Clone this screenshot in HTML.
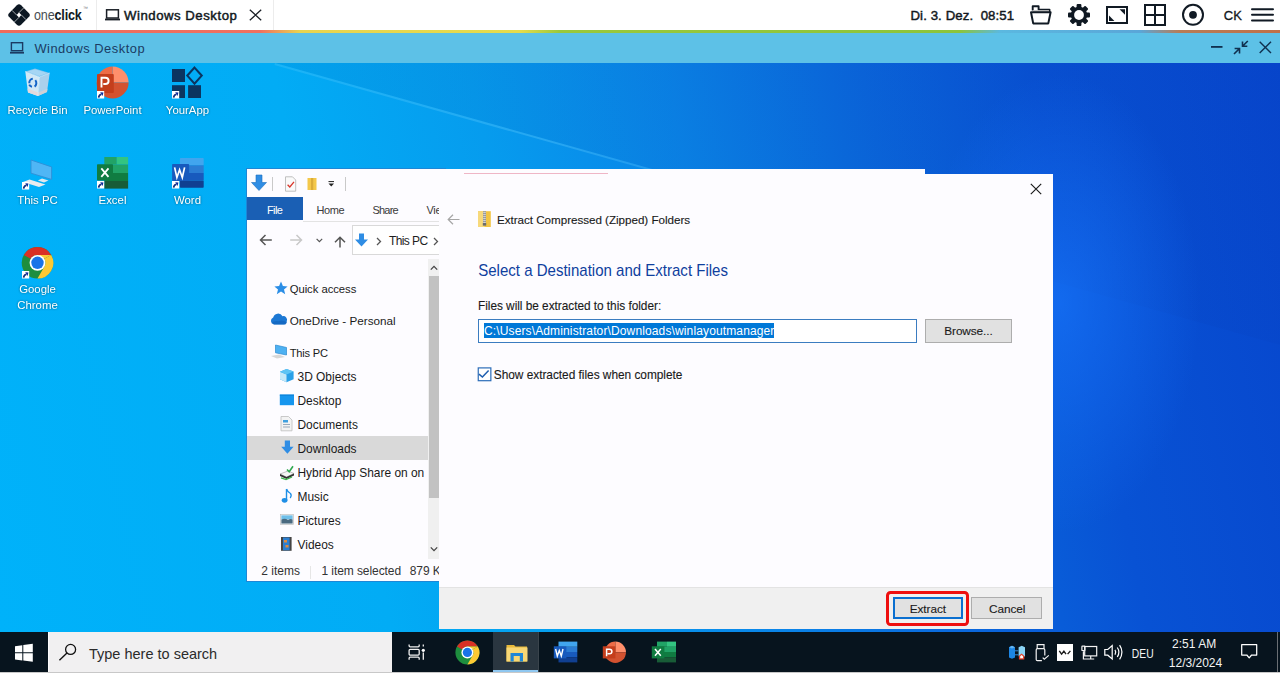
<!DOCTYPE html>
<html><head><meta charset="utf-8"><style>
html,body{margin:0;padding:0;width:1280px;height:673px;overflow:hidden;background:#fff;}
body{position:relative;font-family:"Liberation Sans", sans-serif;}
.t{position:absolute;line-height:1;white-space:nowrap;}
.s{position:absolute;left:0;top:0;overflow:visible;font-family:"Liberation Sans", sans-serif;white-space:pre}
svg{overflow:visible}
</style></head><body>
<div style="position:absolute;left:0px;top:0px;width:1280px;height:30px;background:#fff"></div>
<div style="position:absolute;left:96px;top:0px;width:1px;height:30px;background:#ececec"></div>
<div style="position:absolute;left:273px;top:0px;width:1px;height:30px;background:#ececec"></div>
<svg style="position:absolute;left:7px;top:2.7px;" width="24" height="24" viewBox="0 0 24 24"><g transform="rotate(45 12 12)">
<rect x="3.6" y="3.6" width="16.8" height="16.8" rx="3" fill="#0c1722"/>
<path d="M10.32 3.7 V10.5 M13.5 10.32 H20.3 M13.68 13.5 V20.3 M3.7 13.68 H10.5" fill="none" stroke="#c9ccd0" stroke-width="0.75"/>
<rect x="10.32" y="10.32" width="3.36" height="3.36" fill="#fff"/>
</g></svg>
<svg class="s" width="1" height="1"><text transform="translate(34 20) scale(0.84 1)" x="0" y="0" style="font-size:15px;letter-spacing:-0.2px"><tspan fill="#4a4f55">one</tspan><tspan fill="#111a24" font-weight="bold">click</tspan></text></svg>
<svg class="s" width="1" height="1"><text x="83" y="9.5" text-anchor="start" style="font-size:5px;fill:#777;font-weight:normal;">™</text></svg>
<svg style="position:absolute;left:105px;top:9px;" width="15" height="12" viewBox="0 0 15 12"><rect x="1.6" y="0.8" width="11.8" height="8.2" fill="none" stroke="#1a1f26" stroke-width="1.5"/>
<rect x="0" y="9.6" width="15" height="1.8" fill="#1a1f26"/></svg>
<svg class="s" width="1" height="1"><text x="124" y="20" text-anchor="start" style="font-size:13.2px;fill:#111820;font-weight:normal;letter-spacing:0.52px;stroke:#111820;stroke-width:0.45px">Windows Desktop</text></svg>
<svg style="position:absolute;left:249px;top:9px;" width="13" height="12" viewBox="0 0 13 12"><path d="M0.8 0.8 L12.2 11.2 M12.2 0.8 L0.8 11.2" stroke="#1a1f26" stroke-width="1.3"/></svg>
<svg class="s" width="1" height="1"><text x="910.5" y="20" text-anchor="start" style="font-size:13.2px;fill:#111820;font-weight:normal;letter-spacing:0.1px;stroke:#111820;stroke-width:0.45px">Di. 3. Dez.&nbsp; 08:51</text></svg>
<svg style="position:absolute;left:1030px;top:5px;" width="22" height="20" viewBox="0 0 22 20"><path d="M2.7 5.6 V1.3 H8.6 V4.6 H19.5 V7.2" fill="none" stroke="#111a24" stroke-width="1.9" stroke-linejoin="round"/>
<rect x="3" y="5.2" width="16" height="2" fill="#bbb"/>
<path d="M1 7.3 H20.6 L18.3 18.4 H3.2 Z" fill="none" stroke="#111a24" stroke-width="2" stroke-linejoin="round"/></svg>
<svg style="position:absolute;left:1068px;top:4px;" width="22" height="22" viewBox="0 0 22 22"><rect x="8.6" y="0" width="4.8" height="6" rx="1" transform="rotate(0 11 11)" fill="#0f1822"/><rect x="8.6" y="0" width="4.8" height="6" rx="1" transform="rotate(45 11 11)" fill="#0f1822"/><rect x="8.6" y="0" width="4.8" height="6" rx="1" transform="rotate(90 11 11)" fill="#0f1822"/><rect x="8.6" y="0" width="4.8" height="6" rx="1" transform="rotate(135 11 11)" fill="#0f1822"/><rect x="8.6" y="0" width="4.8" height="6" rx="1" transform="rotate(180 11 11)" fill="#0f1822"/><rect x="8.6" y="0" width="4.8" height="6" rx="1" transform="rotate(225 11 11)" fill="#0f1822"/><rect x="8.6" y="0" width="4.8" height="6" rx="1" transform="rotate(270 11 11)" fill="#0f1822"/><rect x="8.6" y="0" width="4.8" height="6" rx="1" transform="rotate(315 11 11)" fill="#0f1822"/><circle cx="11" cy="11" r="8.2" fill="#0f1822"/><circle cx="11" cy="11" r="4.9" fill="#fff"/></svg>
<svg style="position:absolute;left:1106px;top:6px;" width="22" height="18" viewBox="0 0 22 18"><rect x="1" y="1" width="20" height="16" fill="none" stroke="#111a24" stroke-width="2"/>
<path d="M13.5 3.2 H19 V8.7 Z" fill="#111a24"/><path d="M3 9.6 V15 H8.4 Z" fill="#111a24"/></svg>
<svg style="position:absolute;left:1144px;top:4px;" width="22" height="22" viewBox="0 0 22 22"><rect x="1" y="1" width="20" height="20" fill="none" stroke="#111a24" stroke-width="2"/>
<path d="M11 1 V21 M1 11 H21" stroke="#111a24" stroke-width="2"/></svg>
<svg style="position:absolute;left:1182px;top:4px;" width="22" height="22" viewBox="0 0 22 22"><circle cx="11" cy="10.8" r="10" fill="none" stroke="#111a24" stroke-width="2"/>
<circle cx="11" cy="10.8" r="3.9" fill="#111a24"/></svg>
<svg class="s" width="1" height="1"><text x="1223.8" y="20" text-anchor="start" style="font-size:13px;fill:#111820;font-weight:normal;letter-spacing:0px;stroke:#111820;stroke-width:0.3px">CK</text></svg>
<svg style="position:absolute;left:1251px;top:7px;" width="23" height="16" viewBox="0 0 23 16"><path d="M1 2.2 H22 M1 7.8 H22 M1 13.5 H22" stroke="#111a24" stroke-width="2" stroke-linecap="round"/></svg>
<div style="position:absolute;left:0px;top:30px;width:1280px;height:3px;background:linear-gradient(90deg,#ef6b5c 0px,#f07060 260px,#e8d450 300px,#e6dc4c 520px,#9ac83c 560px,#8cc43c 960px,#5bb8e0 1000px,#5aa6d8 1140px,#b87c56 1180px,#c07048 1280px)"></div>
<div style="position:absolute;left:0px;top:33px;width:1280px;height:30px;background:#5dc1e7"></div>
<svg style="position:absolute;left:10px;top:42px;" width="14" height="12" viewBox="0 0 14 12"><rect x="1.4" y="0.7" width="11.2" height="8" fill="none" stroke="#1b3b63" stroke-width="1.4"/>
<rect x="0" y="9.8" width="14" height="1.8" fill="#1b3b63"/></svg>
<svg class="s" width="1" height="1"><text x="34.4" y="52.6" text-anchor="start" style="font-size:12.9px;fill:#1b3b63;font-weight:normal;letter-spacing:0.5px">Windows Desktop</text></svg>
<svg style="position:absolute;left:1211px;top:46px;" width="12" height="2" viewBox="0 0 12 2"><rect x="0" y="0" width="11.5" height="1.8" fill="#10304f"/></svg>
<svg style="position:absolute;left:1233px;top:40px;" width="16" height="15" viewBox="0 0 16 15"><path d="M1 14 L6.5 8.5 M1.6 8.5 H6.5 V13.5 M14.8 1 L9.5 6.3 M9.5 1.5 V6.3 H14.3" fill="none" stroke="#10304f" stroke-width="1.6"/></svg>
<svg style="position:absolute;left:1259px;top:41px;" width="13" height="13" viewBox="0 0 13 13"><path d="M0.7 0.7 L12 12 M12 0.7 L0.7 12" stroke="#10304f" stroke-width="1.4"/></svg>
<div style="position:absolute;left:0;top:63px;width:1280px;height:569px;overflow:hidden;background:linear-gradient(78deg,#00b2fa 0%,#02acf5 28%,#069cee 42%,#0a84e8 56%,#0a66dc 70%,#0852d4 82%,#0746cd 100%)">
<div style="position:absolute;left:0;top:0;width:1280px;height:569px;clip-path:polygon(275px 0,1280px 0,1280px 282px);background:linear-gradient(90deg,rgba(0,20,110,0.07),rgba(0,20,110,0.03))"></div>
<div style="position:absolute;left:275px;top:0px;width:560px;height:2px;transform-origin:0 0;transform:rotate(15.7deg);background:linear-gradient(90deg,rgba(110,210,255,0.22),rgba(110,210,255,0.3) 50%,rgba(110,210,255,0.15))"></div>
<div style="position:absolute;left:900px;top:0px;width:380px;height:569px;background:radial-gradient(ellipse 140px 230px at 160px 240px,rgba(25,120,255,0.6),rgba(25,120,255,0))"></div>
</div>
<div style="position:absolute;left:0px;top:632px;width:1280px;height:40px;background:#07141e"></div>
<div style="position:absolute;left:0px;top:672px;width:1280px;height:1px;background:#c8c8c8"></div>
<div style="position:absolute;left:1277px;top:632px;width:1px;height:40px;background:#6a6f74"></div>
<div style="position:absolute;left:48px;top:632px;width:344px;height:40px;background:#f1f0f1;border-left:1px solid #fbfbfb;box-sizing:border-box"></div>
<svg style="position:absolute;left:14px;top:643px;" width="20" height="20" viewBox="0 0 20 20"><path d="M1 3.2 L8.3 2.2 V9.3 H1 Z M9.3 2.05 L18.8 0.8 V9.3 H9.3 Z M1 10.3 H8.3 V17.5 L1 16.5 Z M9.3 10.3 H18.8 V18.8 L9.3 17.6 Z" fill="#fff"/></svg>
<svg style="position:absolute;left:58px;top:643px;" width="20" height="18" viewBox="0 0 20 18"><circle cx="12.6" cy="6.4" r="5" fill="none" stroke="#111" stroke-width="1.3"/><path d="M9 10 L1.4 17.2" stroke="#111" stroke-width="1.4"/></svg>
<svg class="s" width="1" height="1"><text x="89" y="659.4" text-anchor="start" style="font-size:14.5px;fill:#2b2b2b;font-weight:normal;letter-spacing:0px">Type here to search</text></svg>
<svg style="position:absolute;left:407px;top:643px;" width="19" height="18" viewBox="0 0 19 18"><g fill="none" stroke="#f0f0f0" stroke-width="1.3"><path d="M2.1 1.4 V2.8 Q2.1 3.9 3.2 3.9 H11.1 Q12.2 3.9 12.2 2.8 V1.4"/><rect x="2.1" y="6.4" width="10.1" height="5.7" rx="1.1"/><path d="M2.1 16.7 V15.3 Q2.1 14.2 3.2 14.2 H11.1 Q12.2 14.2 12.2 15.3 V16.7"/><path d="M16.3 1.4 V3.4 M16.3 9.6 V16.7"/></g><circle cx="16.3" cy="7.3" r="1.6" fill="#fff"/></svg>
<svg style="position:absolute;left:455px;top:640px;" width="25" height="25" viewBox="0 0 25 25">
<circle cx="12.4" cy="12.4" r="12" fill="#1e8e3e"/>
<path d="M12.4 0.4 A12 12 0 0 1 22.8 6.4 L12.4 6.4 A6 6 0 0 0 7.2 9.4 L2 6.4 A12 12 0 0 1 12.4 0.4Z" fill="#d93025"/>
<path d="M22.8 6.4 A12 12 0 0 1 12.4 24.4 L17.6 15.4 A6 6 0 0 0 17.6 9.4 Z" fill="#fcc934"/>
<path d="M22.8 6.4 L12.4 6.4 L17.6 9.4 Z" fill="#fcc934"/>
<circle cx="12.4" cy="12.4" r="6" fill="#fff"/><circle cx="12.4" cy="12.4" r="4.6" fill="#1a73e8"/></svg>
<div style="position:absolute;left:493px;top:632px;width:45px;height:40px;background:#2a3640"></div>
<div style="position:absolute;left:493px;top:670px;width:45px;height:2px;background:#8fc7f0"></div>
<div style="position:absolute;left:538px;top:632px;width:1px;height:40px;background:#3a444c"></div>
<svg style="position:absolute;left:506px;top:643px;" width="22" height="19" viewBox="0 0 22 19"><path d="M0.5 2 H8 L9.5 3.5 H21 V18.5 H0.5 Z" fill="#e8b93a"/><rect x="0.5" y="4.5" width="21" height="14" fill="#f8d775"/><path d="M4.5 18.5 V10 H17 V18.5 H13.8 V13 H7.7 V18.5 Z" fill="#1f86d6"/></svg>
<svg style="position:absolute;left:553px;top:641px;" width="25" height="22" viewBox="0 0 25 22"><rect x="5.5" y="0.6" width="18.8" height="5.2" fill="#41a5ee"/><rect x="5.5" y="5.8" width="18.8" height="5.2" fill="#2b7cd3"/><rect x="5.5" y="11" width="18.8" height="5.2" fill="#185abd"/><rect x="5.5" y="16.2" width="18.8" height="5.2" fill="#103f91"/><rect x="0.8" y="5.3" width="12.6" height="12.1" fill="#185abd"/><path d="M2.6 8 L4.3 15 L6.3 9.6 L8.3 15 L10 8" fill="none" stroke="#fff" stroke-width="1.4"/></svg>
<svg style="position:absolute;left:602px;top:641px;" width="25" height="23" viewBox="0 0 25 23"><path d="M13.3 11.3 V0.6 A10.7 10.7 0 0 1 24 11.3 Z" fill="#ff8f6b"/><path d="M13.3 11.3 V0.6 A10.7 10.7 0 0 0 2.6 11.3 Z" fill="#ed6c47"/><path d="M2.6 11.3 A10.7 10.7 0 0 0 24 11.3 Z" fill="#d35230"/><rect x="0.8" y="5.3" width="12.6" height="12.1" fill="#c43e1c"/><path d="M4.6 15.2 V8.2 H7.4 Q9.9 8.2 9.9 10.5 Q9.9 12.8 7.4 12.8 H5.6" fill="none" stroke="#fff" stroke-width="1.5"/></svg>
<svg style="position:absolute;left:651px;top:641px;" width="26" height="22" viewBox="0 0 26 22"><rect x="6" y="0.6" width="10" height="5.2" fill="#21a366"/><rect x="16" y="0.6" width="9" height="5.2" fill="#33c481"/><rect x="6" y="5.8" width="19" height="5.2" fill="#21a366"/><rect x="6" y="11" width="19" height="5.2" fill="#107c41"/><rect x="6" y="16.2" width="19" height="5.2" fill="#185c37"/><rect x="0.8" y="5.3" width="12.6" height="12.1" fill="#107c41"/><path d="M4 8 L9.8 14.8 M9.8 8 L4 14.8" stroke="#fff" stroke-width="1.5"/></svg>
<svg style="position:absolute;left:1008px;top:645px;" width="18" height="16" viewBox="0 0 18 16"><path d="M1 2.2 L4 0.8 L7 2.2 V12.6 L4 13.8 L1 12.6 Z" fill="#1d86e4"/><path d="M1 2.2 L4 0.8 L7 2.2 L4 3.4 Z" fill="#64b5f0"/><path d="M10.6 2.2 L13.8 0.8 L17 2.2 V11.2 L13.8 12.6 L10.6 11.2 Z" fill="#8ad4f6"/><path d="M7 5.8 H10.6 M7 9.8 H10.6" stroke="#3a8ad6" stroke-width="1"/><path d="M13.6 8.4 L16.3 10.7 V14.6 H10.9 V10.7 Z" fill="#e8452c"/><path d="M13.6 10.1 L15 11.3 V13.3 H12.2 V11.3 Z" fill="#fff"/></svg>
<svg style="position:absolute;left:1035px;top:644px;" width="15" height="17" viewBox="0 0 15 17"><g fill="none" stroke="#f2f2f2" stroke-width="1.2"><path d="M2.2 4.4 V0.7 H9 V4.4"/><path d="M9.8 11.6 V5.9 Q9.8 4.7 8.6 4.7 H2.4 Q1.2 4.7 1.2 5.9 V15.5 Q1.2 16.6 2.4 16.6 H6.9"/><path d="M7.7 13.6 L9.3 15.2 L13.8 11.4"/></g></svg>
<div style="position:absolute;left:1057px;top:644px;width:16px;height:16.5px;background:#fff"></div>
<svg style="position:absolute;left:1057px;top:644px;" width="17" height="17" viewBox="0 0 17 17"><path d="M2.3 6.9 L4.6 10.1 L6.9 7.1 L9 10.1 M10.6 10.1 L13.4 6.9" fill="none" stroke="#1a1a1a" stroke-width="1.4"/></svg>
<svg style="position:absolute;left:1080px;top:645px;" width="19" height="16" viewBox="0 0 19 16"><g fill="none" stroke="#f2f2f2" stroke-width="1.2"><rect x="4.7" y="1.5" width="12" height="9.4"/><path d="M10.7 10.9 V13.8 M6.8 14 H14.2 M3.4 6.2 V14 H6.8"/><rect x="1.9" y="1.1" width="3" height="4.4" rx="0.6"/></g></svg>
<svg style="position:absolute;left:1104px;top:644px;" width="19" height="17" viewBox="0 0 19 17"><g fill="none" stroke="#fff" stroke-width="1.2"><path d="M0.8 5.5 H3.8 L8.2 1.5 V15 L3.8 11.2 H0.8 Z"/><path d="M11 5.8 Q12.6 8.2 11 10.8 M13.3 3.5 Q16.5 8.2 13.3 13 M15.6 1.2 Q20.3 8.2 15.6 15.3"/></g></svg>
<svg class="s" width="1" height="1"><text transform="translate(1131.8 657.7) scale(0.86 1)" x="0" y="0" style="font-size:12px;fill:#f4f4f4;font-weight:normal;">DEU</text></svg>
<svg class="s" width="1" height="1"><text x="1172" y="647.8" text-anchor="start" style="font-size:12px;fill:#f4f4f4;font-weight:normal;letter-spacing:0.05px">2:51 AM</text></svg>
<svg class="s" width="1" height="1"><text x="1168.8" y="666.6" text-anchor="start" style="font-size:12px;fill:#f4f4f4;font-weight:normal;">12/3/2024</text></svg>
<svg style="position:absolute;left:1241px;top:644px;" width="17" height="16" viewBox="0 0 17 16"><path d="M0.7 0.7 H15.7 V11 H10.6 L8.2 13.8 L5.8 11 H0.7 Z" fill="none" stroke="#fff" stroke-width="1.25" stroke-linejoin="round"/></svg>
<div style="position:absolute;left:246px;top:168px;width:200px;height:414px;background:#1d87d6"></div>
<div style="position:absolute;left:247px;top:169px;width:199px;height:412px;background:#fdfcff"></div>
<svg style="position:absolute;left:251px;top:174px;" width="17" height="18" viewBox="0 0 17 18"><path d="M5 1 H11 V8.5 H15.5 L8 16.5 L0.5 8.5 H5 Z" fill="#2f8de4" stroke="#1c6fc0" stroke-width="0.6"/></svg>
<div style="position:absolute;left:272px;top:177px;width:1px;height:14px;background:#c9c9c9"></div>
<svg style="position:absolute;left:284px;top:176px;" width="13" height="16" viewBox="0 0 13 16"><path d="M1.5 0.8 H8.5 L11.7 4 V15.2 H1.5 Z" fill="#fafafa" stroke="#b9b9b9" stroke-width="0.9"/>
<path d="M3.6 8.8 L5.8 11 L10 5.8" fill="none" stroke="#d9362b" stroke-width="1.3"/></svg>
<svg style="position:absolute;left:307px;top:178px;" width="11" height="13" viewBox="0 0 11 13"><rect x="0.5" y="0" width="9" height="12" fill="#f4c84a"/><rect x="4" y="0" width="2.2" height="12" fill="#c99a2e" opacity="0.6"/></svg>
<svg style="position:absolute;left:328px;top:181px;" width="7" height="6" viewBox="0 0 7 6"><rect x="0.5" y="0" width="5.5" height="1.1" fill="#333"/><path d="M0.5 2.4 H6 L3.25 5.4 Z" fill="#222"/></svg>
<div style="position:absolute;left:345px;top:177px;width:1px;height:14px;background:#c9c9c9"></div>
<div style="position:absolute;left:247px;top:197px;width:56px;height:23px;background:#1a5fb4"></div>
<svg class="s" width="1" height="1"><text x="267" y="213.75" text-anchor="start" style="font-size:11px;fill:#fff;font-weight:normal;letter-spacing:-0.6px">File</text></svg>
<svg class="s" width="1" height="1"><text x="316.5" y="213.75" text-anchor="start" style="font-size:11px;fill:#3b3b3b;font-weight:normal;letter-spacing:-0.4px">Home</text></svg>
<svg class="s" width="1" height="1"><text x="372.5" y="213.75" text-anchor="start" style="font-size:11px;fill:#3b3b3b;font-weight:normal;letter-spacing:-0.8px">Share</text></svg>
<svg class="s" width="1" height="1"><text x="426.5" y="213.75" text-anchor="start" style="font-size:11px;fill:#3b3b3b;font-weight:normal;letter-spacing:-0.3px">View</text></svg>
<div style="position:absolute;left:303px;top:221px;width:143px;height:1px;background:#e3e3e3"></div>
<svg style="position:absolute;left:259px;top:234px;" width="14" height="12" viewBox="0 0 14 12"><path d="M1.5 6 H12.8 M6.5 1 L1.5 6 L6.5 11" fill="none" stroke="#555" stroke-width="1.5"/></svg>
<svg style="position:absolute;left:289px;top:234px;" width="14" height="12" viewBox="0 0 14 12"><path d="M12.5 6 H1.2 M7.5 1 L12.5 6 L7.5 11" fill="none" stroke="#c8c8c8" stroke-width="1.5"/></svg>
<svg style="position:absolute;left:316px;top:238px;" width="7" height="5" viewBox="0 0 7 5"><path d="M0.6 0.8 L3.4 3.6 L6.2 0.8" fill="none" stroke="#555" stroke-width="1.2"/></svg>
<svg style="position:absolute;left:334px;top:236px;" width="12" height="12" viewBox="0 0 12 12"><path d="M6 11.5 V1.2 M1 6.2 L6 1.2 L11 6.2" fill="none" stroke="#555" stroke-width="1.5"/></svg>
<div style="position:absolute;left:352px;top:225px;width:94px;height:30px;border:1px solid #d9d9d9;border-right:none;box-sizing:border-box;background:#fff"></div>
<svg style="position:absolute;left:355px;top:233px;" width="14" height="14" viewBox="0 0 14 14"><path d="M4 0.5 H9 V6.5 H13 L6.5 13.5 L0 6.5 H4 Z" fill="#2f8de4"/></svg>
<svg style="position:absolute;left:376px;top:237px;" width="6" height="9" viewBox="0 0 6 9"><path d="M1 1 L4.5 4.5 L1 8" fill="none" stroke="#555" stroke-width="1.3"/></svg>
<svg class="s" width="1" height="1"><text x="389" y="245" text-anchor="start" style="font-size:12px;fill:#1e1e1e;font-weight:normal;letter-spacing:-0.6px">This PC</text></svg>
<svg style="position:absolute;left:433px;top:237px;" width="6" height="9" viewBox="0 0 6 9"><path d="M1 1 L4.5 4.5 L1 8" fill="none" stroke="#555" stroke-width="1.3"/></svg>
<div style="position:absolute;left:247px;top:436px;width:181px;height:24px;background:#d9d9d9"></div>
<svg style="position:absolute;left:273px;top:281px;" width="15" height="14" viewBox="0 0 15 14"><path d="M8 0.6 L9.9 5.1 L14.6 5.4 L11 8.5 L12.2 13.2 L8 10.6 L3.8 13.2 L5 8.5 L1.4 5.4 L6.1 5.1 Z" fill="#2b8ee6"/></svg>
<svg class="s" width="1" height="1"><text x="289.7" y="293" text-anchor="start" style="font-size:11.3px;fill:#1a1a1a;font-weight:normal;letter-spacing:-0.05px">Quick access</text></svg>
<svg style="position:absolute;left:270px;top:313px;" width="18" height="12" viewBox="0 0 18 12"><path d="M4 11.5 A3.6 3.6 0 0 1 3.2 4.6 A5 5 0 0 1 12.5 3.2 A3.7 3.7 0 0 1 16.8 8.2 A3.4 3.4 0 0 1 13.8 11.5 Z" fill="#1c78d4"/><path d="M1.2 10 Q4 7.5 8.5 8.2 Q13 6.5 16.9 9.6 L15.5 11.5 H4 Z" fill="#0f5fb8" opacity="0.6"/></svg>
<svg class="s" width="1" height="1"><text x="289.7" y="324.85" text-anchor="start" style="font-size:11.7px;fill:#1a1a1a;font-weight:normal;letter-spacing:0px">OneDrive - Personal</text></svg>
<svg style="position:absolute;left:270px;top:344px;" width="18" height="15" viewBox="0 0 18 15"><path d="M5.5 1 L16.5 3.5 V11 L5.5 8.8 Z" fill="#4db1f2" stroke="#2d8ad0" stroke-width="0.7"/><path d="M1 12 L9 10.5 L15 13 L7 14.5 Z" fill="#d7d7d7"/></svg>
<svg class="s" width="1" height="1"><text x="289.7" y="356.7" text-anchor="start" style="font-size:11.1px;fill:#1a1a1a;font-weight:normal;letter-spacing:-0.2px">This PC</text></svg>
<svg style="position:absolute;left:279px;top:368px;" width="16" height="15" viewBox="0 0 16 15"><path d="M1 3.8 L7.5 1 L14.6 3.6 L14.6 11.3 L7.5 14.2 L1 11.3 Z" fill="#2aa0e8"/><path d="M1 3.8 L7.5 6.4 L7.5 14.2 L1 11.3 Z" fill="#c6e8f8"/><path d="M1 3.8 L7.5 1 L14.6 3.6 L7.5 6.4 Z" fill="#5fc4f4"/></svg>
<svg class="s" width="1" height="1"><text x="297.5" y="380.5" text-anchor="start" style="font-size:11.95px;fill:#1a1a1a;font-weight:normal;letter-spacing:0px">3D Objects</text></svg>
<svg style="position:absolute;left:279px;top:394px;" width="16" height="12" viewBox="0 0 16 12"><rect x="0.8" y="0.6" width="14.2" height="10.6" fill="#1696ee"/><rect x="0.8" y="0.6" width="14.2" height="1" fill="#0b7fd4"/></svg>
<svg class="s" width="1" height="1"><text x="297.5" y="404.5" text-anchor="start" style="font-size:11.95px;fill:#1a1a1a;font-weight:normal;letter-spacing:0px">Desktop</text></svg>
<svg style="position:absolute;left:280px;top:416px;" width="13" height="16" viewBox="0 0 13 16"><path d="M1 0.5 H8.5 L12 4 V14.8 H1 Z" fill="#f3f3f3" stroke="#bdbdbd" stroke-width="0.8"/><rect x="3" y="4" width="5" height="2.5" fill="#3fa0e0"/><rect x="3" y="8" width="7" height="1" fill="#9ab"/><rect x="3" y="10.5" width="7" height="1" fill="#9ab"/></svg>
<svg class="s" width="1" height="1"><text x="297.5" y="428.7" text-anchor="start" style="font-size:11.95px;fill:#1a1a1a;font-weight:normal;letter-spacing:0px">Documents</text></svg>
<svg style="position:absolute;left:281px;top:440px;" width="13" height="15" viewBox="0 0 13 15"><path d="M3.8 0.5 H9 V6.8 H12.6 L6.4 13.8 L0.2 6.8 H3.8 Z" fill="#2f8de4"/></svg>
<svg class="s" width="1" height="1"><text x="297.5" y="452.8" text-anchor="start" style="font-size:11.95px;fill:#1a1a1a;font-weight:normal;letter-spacing:0px">Downloads</text></svg>
<svg style="position:absolute;left:279px;top:465px;" width="16" height="15" viewBox="0 0 16 15"><path d="M1 9 L9 6 L15 8.5 L7.5 12 Z" fill="#f5f5f5" stroke="#999" stroke-width="0.6"/><path d="M1 9 V11 L7.5 14 L15 10.5 V8.5 L7.5 12 Z" fill="#333"/><path d="M2 12.8 L7 14.5 L13 12" stroke="#3cb54a" stroke-width="1.3" fill="none"/><path d="M8 4.5 L10.2 6.8 L14 1.2" stroke="#2fa84f" stroke-width="1.6" fill="none"/></svg>
<svg class="s" width="1" height="1"><text x="297.5" y="476.8" text-anchor="start" style="font-size:11.95px;fill:#1a1a1a;font-weight:normal;letter-spacing:0px">Hybrid App Share on on</text></svg>
<svg style="position:absolute;left:281px;top:488px;" width="12" height="16" viewBox="0 0 12 16"><path d="M5.5 1 V12" stroke="#1f8fe6" stroke-width="1.4"/><ellipse cx="3.6" cy="12.3" rx="2.9" ry="2.4" fill="#1f8fe6"/><path d="M5.5 1 Q6.5 4 9.5 5.5 Q11 7.5 9.2 10" fill="none" stroke="#1f8fe6" stroke-width="1.3"/></svg>
<svg class="s" width="1" height="1"><text x="297.5" y="500.8" text-anchor="start" style="font-size:11.95px;fill:#1a1a1a;font-weight:normal;letter-spacing:0px">Music</text></svg>
<svg style="position:absolute;left:280px;top:514px;" width="14" height="11" viewBox="0 0 14 11"><rect x="0.4" y="0.4" width="13.2" height="10.2" fill="#e8eef2" stroke="#bbb" stroke-width="0.6"/><rect x="1.4" y="1.4" width="11.2" height="4" fill="#6fbfe9"/><path d="M1.4 5.5 Q5 4 8 6 Q10.5 4.5 12.6 5.5 V9.6 H1.4 Z" fill="#4a6a80"/></svg>
<svg class="s" width="1" height="1"><text x="297.5" y="524.8" text-anchor="start" style="font-size:11.95px;fill:#1a1a1a;font-weight:normal;letter-spacing:0px">Pictures</text></svg>
<svg style="position:absolute;left:281px;top:537px;" width="11" height="14" viewBox="0 0 11 14"><rect x="0" y="0" width="10.6" height="13.8" fill="#444"/><rect x="2" y="0.5" width="6.6" height="12.8" fill="#2c7fd0"/><rect x="3" y="3" width="3" height="2.5" fill="#e08a3c"/><rect x="4.5" y="8" width="3" height="2.5" fill="#e08a3c"/></svg>
<svg class="s" width="1" height="1"><text x="297.5" y="548.8" text-anchor="start" style="font-size:11.95px;fill:#1a1a1a;font-weight:normal;letter-spacing:0px">Videos</text></svg>
<div style="position:absolute;left:428px;top:259px;width:18px;height:300px;background:#f0f0f0"></div>
<div style="position:absolute;left:429px;top:276px;width:10px;height:222px;background:#c2c2c2"></div>
<svg style="position:absolute;left:430px;top:265px;" width="8" height="6" viewBox="0 0 8 6"><path d="M0.8 4.6 L4 1.4 L7.2 4.6" fill="none" stroke="#444" stroke-width="1.3"/></svg>
<svg style="position:absolute;left:430px;top:546px;" width="8" height="6" viewBox="0 0 8 6"><path d="M0.8 1.4 L4 4.6 L7.2 1.4" fill="none" stroke="#444" stroke-width="1.3"/></svg>
<svg class="s" width="1" height="1"><text x="261.3" y="575.3" text-anchor="start" style="font-size:12px;fill:#333;font-weight:normal;">2 items</text></svg>
<div style="position:absolute;left:310px;top:566px;width:1px;height:13px;background:#e6e6e6"></div>
<svg class="s" width="1" height="1"><text x="321.5" y="575.3" text-anchor="start" style="font-size:12px;fill:#333;font-weight:normal;letter-spacing:-0.08px">1 item selected</text></svg>
<svg class="s" width="1" height="1"><text x="409.7" y="575.3" text-anchor="start" style="font-size:12px;fill:#333;font-weight:normal;letter-spacing:-0.08px">879 KB</text></svg>
<div style="position:absolute;left:439px;top:169px;width:486px;height:6px;background:#fdfcff"></div>
<div style="position:absolute;left:464px;top:173px;width:144px;height:1px;background:#efb6c6"></div>
<div style="position:absolute;left:439px;top:174px;width:614px;height:455px;background:#fdfcff"></div>
<svg style="position:absolute;left:1030px;top:183px;" width="12" height="12" viewBox="0 0 12 12"><path d="M0.8 0.8 L11.2 11.2 M11.2 0.8 L0.8 11.2" stroke="#1a1a1a" stroke-width="1.15"/></svg>
<svg style="position:absolute;left:447px;top:214px;" width="13" height="11" viewBox="0 0 13 11"><path d="M1.2 5.5 H12.5 M6 0.8 L1.2 5.5 L6 10.2" fill="none" stroke="#a6a6a6" stroke-width="1.2"/></svg>
<svg style="position:absolute;left:477px;top:210px;" width="15" height="18" viewBox="0 0 15 18"><path d="M1 1.2 H13.8 V17 H1 Z" fill="#f2c443"/><rect x="1" y="1.2" width="6.5" height="15.8" fill="#f7d97c"/><rect x="6" y="1.2" width="3" height="14" fill="#8a8a8a"/><path d="M6.2 2.3 H8.8 M6.2 4.3 H8.8 M6.2 6.3 H8.8 M6.2 8.3 H8.8 M6.2 10.3 H8.8 M6.2 12.3 H8.8" stroke="#f0f0f0" stroke-width="0.9"/><rect x="5.8" y="13" width="3.4" height="2.6" fill="#6c6c6c"/></svg>
<svg class="s" width="1" height="1"><text x="497" y="224.2" text-anchor="start" style="font-size:11.65px;fill:#1a1a1a;font-weight:normal;letter-spacing:-0.03px;stroke:#1a1a1a;stroke-width:0.12px">Extract Compressed (Zipped) Folders</text></svg>
<svg class="s" width="1" height="1"><text transform="translate(478.2 275.6) scale(0.94 1)" x="0" y="0" style="font-size:16px;fill:#0f3f9e;font-weight:normal;">Select a Destination and Extract Files</text></svg>
<svg class="s" width="1" height="1"><text x="478" y="310.2" text-anchor="start" style="font-size:11.85px;fill:#1a1a1a;font-weight:normal;letter-spacing:-0.03px;stroke:#1a1a1a;stroke-width:0.12px">Files will be extracted to this folder:</text></svg>
<div style="position:absolute;left:477.5px;top:319px;width:439px;height:24px;border:1px solid #3b7cc0;box-sizing:border-box;background:#fff"></div>
<div style="position:absolute;left:483.8px;top:323px;width:290.7px;height:15px;background:#0078d7"></div>
<svg class="s" width="1" height="1"><text x="484" y="334.8" text-anchor="start" style="font-size:12px;fill:#fff;font-weight:normal;letter-spacing:0.13px">C:\Users\Administrator\Downloads\winlayoutmanager</text></svg>
<div style="position:absolute;left:925px;top:318.5px;width:87px;height:24px;background:#e1e1e1;border:1px solid #adadad;box-sizing:border-box"></div>
<svg class="s" width="1" height="1"><text x="944.3" y="334.7" text-anchor="start" style="font-size:11.8px;fill:#1a1a1a;font-weight:normal;letter-spacing:-0.1px;stroke:#1a1a1a;stroke-width:0.12px">Browse...</text></svg>
<svg style="position:absolute;left:477px;top:367px;" width="14" height="14" viewBox="0 0 14 14"><rect x="1.25" y="0.9" width="12.6" height="12.8" fill="#fff" stroke="#2c6db8" stroke-width="1.2"/><path d="M2 7.1 L5.4 10 L11.6 3.4" fill="none" stroke="#1f5fb0" stroke-width="1.5"/></svg>
<svg class="s" width="1" height="1"><text x="493.75" y="378.75" text-anchor="start" style="font-size:11.9px;fill:#1a1a1a;font-weight:normal;letter-spacing:-0.03px;stroke:#1a1a1a;stroke-width:0.12px">Show extracted files when complete</text></svg>
<div style="position:absolute;left:439px;top:587px;width:614px;height:42px;background:#f0f0f0"></div>
<div style="position:absolute;left:439px;top:587px;width:614px;height:1px;background:#e3e3e3"></div>
<div style="position:absolute;left:885.5px;top:591px;width:83px;height:34.5px;border:3px solid #ee0f0f;border-radius:4.5px;box-sizing:border-box"></div>
<div style="position:absolute;left:892.5px;top:597px;width:70px;height:21.5px;background:#e1e1e1;border:2px solid #0a6fd0;box-sizing:border-box"></div>
<svg class="s" width="1" height="1"><text x="909.7" y="612.8" text-anchor="start" style="font-size:11.8px;fill:#1a1a1a;font-weight:normal;letter-spacing:-0.05px;stroke:#1a1a1a;stroke-width:0.12px">Extract</text></svg>
<div style="position:absolute;left:971px;top:597px;width:71px;height:21.5px;background:#e1e1e1;border:1px solid #adadad;box-sizing:border-box"></div>
<svg class="s" width="1" height="1"><text x="989" y="612.8" text-anchor="start" style="font-size:11.8px;fill:#1a1a1a;font-weight:normal;letter-spacing:-0.05px;stroke:#1a1a1a;stroke-width:0.12px">Cancel</text></svg>
<svg style="position:absolute;left:24px;top:67px;" width="28" height="31" viewBox="0 0 28 31">
<path d="M1.3 4.5 L15.5 10 L14 29 L4 25.5 Z" fill="#d2e8f6"/>
<path d="M15.5 10 L25.7 6 L23 25 L14 29 Z" fill="#a9d0ec"/>
<path d="M1.3 4.5 L11 1.4 L25.7 6 L15.5 10 Z" fill="#7cc0ec"/>
<path d="M3.2 4.6 L11 2.3 L23.6 6.1 L15.4 9.1 Z" fill="#a6d6f4"/>
<path d="M3.4 21.6 L14.3 25.4 L14 29 L4 25.5 Z" fill="#e4d9dc"/>
<path d="M14.3 25.4 L23.5 21.8 L23 25 L14 29 Z" fill="#cfd0d6"/>
<path d="M1.3 4.5 L15.5 10 L25.7 6 M15.5 10 L14 29" fill="none" stroke="#e9f5fc" stroke-width="0.6"/>
<g fill="none" stroke="#1565c8" stroke-width="2">
<path d="M5.3 16.2 A3.8 4.2 0 0 1 8.8 11.8"/><path d="M11.3 13.2 A3.8 4.2 0 0 1 10.6 19.6"/><path d="M8 19.8 A3.8 4.2 0 0 1 5.2 17.6"/>
</g></svg>
<svg class="s" width="1" height="1"><text x="37.5" y="113.5" text-anchor="middle" style="font-size:11.4px;fill:#fff;filter:drop-shadow(0 0.5px 1px rgba(0,0,0,0.45))">Recycle Bin</text></svg>
<svg style="position:absolute;left:96px;top:66px;" width="34" height="34" viewBox="0 0 34 34">
<path d="M16.6 16.5 V0.5 A16 16 0 0 1 32.6 16.5 Z" fill="#ff8f6b"/>
<path d="M16.6 16.5 V0.5 A16 16 0 0 0 0.6 16.5 Z" fill="#ed6c47"/>
<path d="M0.6 16.5 A16 16 0 0 0 32.6 16.5 Z" fill="#d35230"/>
<rect x="1" y="7.9" width="16.8" height="19" rx="1" fill="#c43e1c"/>
<path d="M5.5 21.5 V11.8 H9.3 Q12.6 11.8 12.6 14.9 Q12.6 18 9.3 18 H7.3" fill="none" stroke="#fff" stroke-width="1.9"/></svg>
<svg style="position:absolute;left:96.8px;top:91px;" width="8" height="8" viewBox="0 0 8 8"><rect x="0" y="0" width="7.2" height="7.5" fill="#fff"/>
<path d="M1.6 6.6 Q1.8 4 4.4 3.2" fill="none" stroke="#152f7e" stroke-width="1.7"/>
<path d="M3.2 1.2 L6.4 1.6 L5.6 4.9 Z" fill="#0b2a9a"/></svg>
<svg class="s" width="1" height="1"><text x="112.5" y="113.5" text-anchor="middle" style="font-size:11.4px;fill:#fff;filter:drop-shadow(0 0.5px 1px rgba(0,0,0,0.45))">PowerPoint</text></svg>
<svg style="position:absolute;left:171px;top:66px;" width="34" height="34" viewBox="0 0 34 34">
<rect x="1" y="3" width="13" height="13" fill="#0b3560"/>
<rect x="1" y="19.2" width="13" height="12.8" fill="#0b3560"/>
<rect x="17.1" y="19.2" width="12.9" height="12.8" fill="#0b3560"/>
<path d="M23.5 1.6 L30.7 9.6 L23.5 17.6 L16.3 9.6 Z" fill="none" stroke="#0b3560" stroke-width="2.1"/></svg>
<svg style="position:absolute;left:172px;top:91px;" width="8" height="8" viewBox="0 0 8 8"><rect x="0" y="0" width="7.2" height="7.5" fill="#fff"/>
<path d="M1.6 6.6 Q1.8 4 4.4 3.2" fill="none" stroke="#152f7e" stroke-width="1.7"/>
<path d="M3.2 1.2 L6.4 1.6 L5.6 4.9 Z" fill="#0b2a9a"/></svg>
<svg class="s" width="1" height="1"><text x="187.5" y="113.5" text-anchor="middle" style="font-size:11.4px;fill:#fff;filter:drop-shadow(0 0.5px 1px rgba(0,0,0,0.45))">YourApp</text></svg>
<svg style="position:absolute;left:20px;top:158px;" width="34" height="32" viewBox="0 0 34 32">
<path d="M11 2 L31.6 8.9 L31.6 21.4 L11 15.2 Z" fill="#4fb6f5" stroke="#2f8fd6" stroke-width="0.9"/>
<path d="M22 20.5 L28.5 22.4 L24 24.4 L17.8 22.4 Z" fill="#dfe8ee"/>
<path d="M9.5 21.5 L25.5 26.5 L19 29 L3 24 Z" fill="#e8ecef"/></svg>
<svg style="position:absolute;left:21.8px;top:181.8px;" width="8" height="8" viewBox="0 0 8 8"><rect x="0" y="0" width="7.2" height="7.5" fill="#fff"/>
<path d="M1.6 6.6 Q1.8 4 4.4 3.2" fill="none" stroke="#152f7e" stroke-width="1.7"/>
<path d="M3.2 1.2 L6.4 1.6 L5.6 4.9 Z" fill="#0b2a9a"/></svg>
<svg class="s" width="1" height="1"><text x="37.5" y="203.5" text-anchor="middle" style="font-size:11.4px;fill:#fff;filter:drop-shadow(0 0.5px 1px rgba(0,0,0,0.45))">This PC</text></svg>
<svg style="position:absolute;left:96px;top:156px;" width="34" height="34" viewBox="0 0 34 34">
<rect x="8.3" y="1" width="12.5" height="7.5" fill="#21a366"/>
<rect x="20.8" y="1" width="11.3" height="7.5" fill="#33c481"/>
<rect x="8.3" y="8.5" width="23.8" height="8.5" fill="#21a366"/>
<rect x="8.3" y="17" width="23.8" height="8" fill="#107c41"/>
<rect x="8.3" y="25" width="23.8" height="7.6" fill="#185c37"/>
<rect x="1" y="8.2" width="16" height="16.4" rx="0.8" fill="#107c41"/>
<path d="M5.3 12.3 L12.5 20.8 M12.5 12.3 L5.3 20.8" stroke="#fff" stroke-width="1.8"/></svg>
<svg style="position:absolute;left:96.8px;top:181.2px;" width="8" height="8" viewBox="0 0 8 8"><rect x="0" y="0" width="7.2" height="7.5" fill="#fff"/>
<path d="M1.6 6.6 Q1.8 4 4.4 3.2" fill="none" stroke="#152f7e" stroke-width="1.7"/>
<path d="M3.2 1.2 L6.4 1.6 L5.6 4.9 Z" fill="#0b2a9a"/></svg>
<svg class="s" width="1" height="1"><text x="112.5" y="203.5" text-anchor="middle" style="font-size:11.4px;fill:#fff;filter:drop-shadow(0 0.5px 1px rgba(0,0,0,0.45))">Excel</text></svg>
<svg style="position:absolute;left:171px;top:157px;" width="34" height="33" viewBox="0 0 34 33">
<rect x="8.9" y="1" width="23.8" height="7.3" rx="0.8" fill="#41a5ee"/>
<rect x="8.9" y="8.3" width="23.8" height="7.7" fill="#2b7cd3"/>
<rect x="8.9" y="16" width="23.8" height="7.7" fill="#185abd"/>
<rect x="8.9" y="23.7" width="23.8" height="7" rx="0.8" fill="#103f91"/>
<rect x="1.1" y="6.9" width="17" height="17" rx="0.8" fill="#185abd"/>
<path d="M3.6 10.4 L5.9 20.5 L8.6 12.8 L11.3 20.5 L13.6 10.4" fill="none" stroke="#fff" stroke-width="1.7" stroke-linejoin="miter"/></svg>
<svg style="position:absolute;left:172px;top:181px;" width="8" height="8" viewBox="0 0 8 8"><rect x="0" y="0" width="7.2" height="7.5" fill="#fff"/>
<path d="M1.6 6.6 Q1.8 4 4.4 3.2" fill="none" stroke="#152f7e" stroke-width="1.7"/>
<path d="M3.2 1.2 L6.4 1.6 L5.6 4.9 Z" fill="#0b2a9a"/></svg>
<svg class="s" width="1" height="1"><text x="187.5" y="203.5" text-anchor="middle" style="font-size:11.4px;fill:#fff;filter:drop-shadow(0 0.5px 1px rgba(0,0,0,0.45))">Word</text></svg>
<svg style="position:absolute;left:21px;top:246px;" width="34" height="34" viewBox="0 0 34 34">
<circle cx="16.5" cy="16.8" r="15.8" fill="#1e8e3e"/>
<path d="M16.5 1 A15.8 15.8 0 0 1 30.2 8.9 L16.5 8.9 A7.9 7.9 0 0 0 9.7 12.85 L2.8 8.9 A15.8 15.8 0 0 1 16.5 1Z" fill="#d93025"/>
<path d="M30.2 8.9 A15.8 15.8 0 0 1 16.5 32.6 L23.3 20.75 A7.9 7.9 0 0 0 23.3 12.85 Z" fill="#fcc934"/>
<path d="M30.2 8.9 L16.5 8.9 L23.3 12.85 Z" fill="#fcc934"/>
<circle cx="16.5" cy="16.8" r="7.9" fill="#fff"/>
<circle cx="16.5" cy="16.8" r="6.2" fill="#1a73e8"/></svg>
<svg style="position:absolute;left:21.5px;top:271.4px;" width="8" height="8" viewBox="0 0 8 8"><rect x="0" y="0" width="7.2" height="7.5" fill="#fff"/>
<path d="M1.6 6.6 Q1.8 4 4.4 3.2" fill="none" stroke="#152f7e" stroke-width="1.7"/>
<path d="M3.2 1.2 L6.4 1.6 L5.6 4.9 Z" fill="#0b2a9a"/></svg>
<svg class="s" width="1" height="1"><text x="37.5" y="293.4" text-anchor="middle" style="font-size:11.4px;fill:#fff;filter:drop-shadow(0 0.5px 1px rgba(0,0,0,0.45))">Google</text></svg>
<svg class="s" width="1" height="1"><text x="37.5" y="309" text-anchor="middle" style="font-size:11.4px;fill:#fff;filter:drop-shadow(0 0.5px 1px rgba(0,0,0,0.45))">Chrome</text></svg>
</body></html>
